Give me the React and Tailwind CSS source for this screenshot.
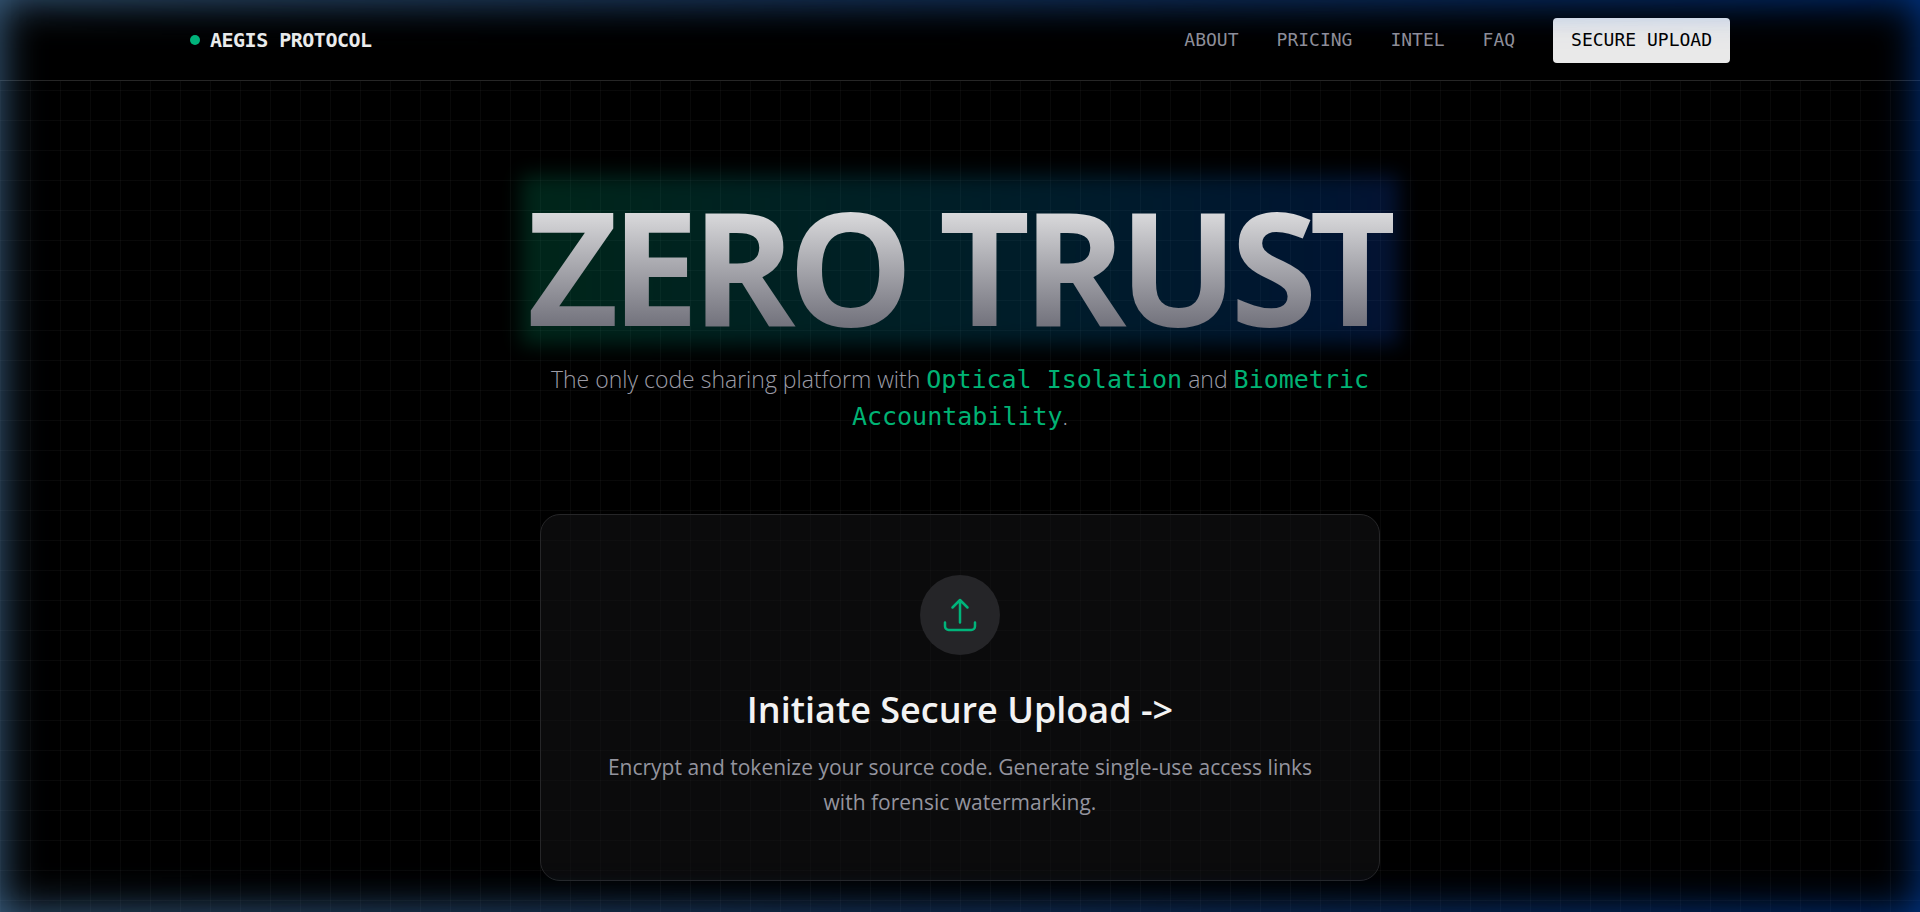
import React from "react";

const navLinks = [
  { label: "ABOUT", href: "#about" },
  { label: "PRICING", href: "#pricing" },
  { label: "INTEL", href: "#intel" },
  { label: "FAQ", href: "#faq" },
];

function UploadIcon() {
  return (
    <svg
      viewBox="0 0 24 24"
      fill="none"
      stroke="currentColor"
      strokeWidth="1.5"
      strokeLinecap="round"
      strokeLinejoin="round"
      className="size-10 text-[#00b47a]"
      aria-hidden="true"
    >
      <path d="M3 16.5v2.25A2.25 2.25 0 0 0 5.25 21h13.5A2.25 2.25 0 0 0 21 18.75V16.5m-13.5-9L12 3m0 0 4.5 4.5M12 3v13.5" />
    </svg>
  );
}

function Header() {
  return (
    <header className="border-b border-[#262626] bg-black">
      <div className="mx-auto flex h-20 max-w-[1600px] items-center justify-between px-[30px] font-['DejaVu_Sans_Mono',monospace]">
        <a href="#home" className="flex items-center gap-2.5 text-xl font-bold tracking-tight text-[#ececec]">
          <span className="size-2.5 rounded-full bg-[#00b47a]" />
          AEGIS PROTOCOL
        </a>
        <nav className="flex items-center gap-[38px] text-lg text-[#8f8f99]">
          {navLinks.map((link) => (
            <a key={link.label} href={link.href}>
              {link.label}
            </a>
          ))}
          <button type="button" className="h-[45px] rounded bg-[#e9e9e9] px-[18px] font-medium text-black">
            SECURE UPLOAD
          </button>
        </nav>
      </div>
    </header>
  );
}

function Highlight({ children }) {
  return (
    <span className="font-['DejaVu_Sans_Mono',monospace] text-[25px] leading-[30px] font-normal text-[#00b374]">
      {children}
    </span>
  );
}

function Hero() {
  return (
    <section className="flex flex-col items-center text-center">
      <div className="relative">
        <div className="absolute -inset-x-1.5 top-0 h-[170px] bg-linear-to-r from-[#00bc7d] to-[#155dfc] opacity-20 blur-[10px]" />
        <h1 className="relative bg-linear-to-b from-[#f2f2f2] from-7% to-[#71717b] to-85% bg-clip-text text-[158px] leading-[180px] font-bold tracking-tighter text-transparent">
          ZERO TRUST
        </h1>
      </div>
      <p className="mt-1.5 max-w-[860px] text-[23px] leading-[37px] font-light text-[#9c9ca6]">
        The only code sharing platform with <Highlight>Optical Isolation</Highlight> and{" "}
        <Highlight>Biometric</Highlight> <Highlight>Accountability</Highlight>.
      </p>
    </section>
  );
}

function UploadCard() {
  return (
    <a
      href="#upload"
      className="mt-[79px] flex w-full max-w-[840px] flex-col items-center rounded-[20px] border border-[#262628] bg-[#18181b]/45 px-[60px] py-[60px] text-center"
    >
      <span className="flex size-20 items-center justify-center rounded-full bg-[#252528]">
        <UploadIcon />
      </span>
      <h2 className="mt-8 text-4xl leading-[45px] font-semibold text-[#f3f3f3]">Initiate Secure Upload -&gt;</h2>
      <p className="mt-[18px] text-[21px] leading-[35px] text-[#94949e]">
        Encrypt and tokenize your source code. Generate single-use access links with forensic watermarking.
      </p>
    </a>
  );
}

function EdgeGlow() {
  return (
    <div className="pointer-events-none fixed inset-0 z-50" aria-hidden="true">
      <div className="absolute inset-0 mask-r-from-0% mask-r-to-100% shadow-[inset_0_0_40px_rgba(92,150,205,0.68)]" />
      <div className="absolute inset-0 mask-l-from-0% mask-l-to-100% shadow-[inset_0_0_40px_rgba(0,88,225,0.63)]" />
    </div>
  );
}

export default function App() {
  return (
    <div className="min-h-screen bg-black bg-[linear-gradient(to_right,#80808012_1px,transparent_1px),linear-gradient(to_bottom,#80808012_1px,transparent_1px)] bg-size-[30px_30px] font-['Open_Sans','Noto_Sans',sans-serif]">
      <Header />
      <main className="flex flex-col items-center px-[30px] pt-[94px] pb-[30px]">
        <Hero />
        <UploadCard />
      </main>
      <EdgeGlow />
    </div>
  );
}
